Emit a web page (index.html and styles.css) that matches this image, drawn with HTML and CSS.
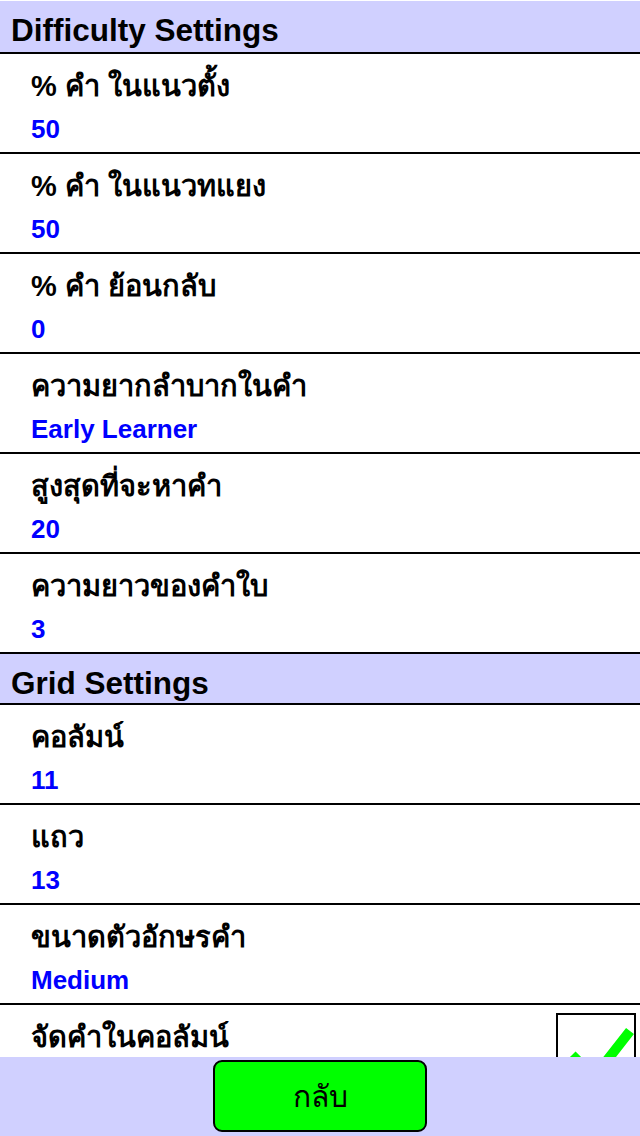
FILE: index.html
```html
<!doctype html>
<html lang="th">
<head>
  <meta charset="utf-8">
  <meta name="viewport" content="width=device-width, initial-scale=1">
  <title>Settings</title>
  <link rel="stylesheet" href="styles.css">
</head>
<body>
  <div class="screen">
    <div class="settings">
      <h2 class="section-title">Difficulty Settings</h2>
      <div class="setting">
        <p class="setting-label">% คำ ในแนวตั้ง</p>
        <p class="setting-value">50</p>
      </div>
      <div class="setting">
        <p class="setting-label">% คำ ในแนวทแยง</p>
        <p class="setting-value">50</p>
      </div>
      <div class="setting">
        <p class="setting-label">% คำ ย้อนกลับ</p>
        <p class="setting-value">0</p>
      </div>
      <div class="setting">
        <p class="setting-label">ความยากลำบากในคำ</p>
        <p class="setting-value">Early Learner</p>
      </div>
      <div class="setting">
        <p class="setting-label">สูงสุดที่จะหาคำ</p>
        <p class="setting-value">20</p>
      </div>
      <div class="setting">
        <p class="setting-label">ความยาวของคำใบ</p>
        <p class="setting-value">3</p>
      </div>

      <h2 class="section-title">Grid Settings</h2>
      <div class="setting">
        <p class="setting-label">คอลัมน์</p>
        <p class="setting-value">11</p>
      </div>
      <div class="setting">
        <p class="setting-label">แถว</p>
        <p class="setting-value">13</p>
      </div>
      <div class="setting">
        <p class="setting-label">ขนาดตัวอักษรคำ</p>
        <p class="setting-value">Medium</p>
      </div>
      <div class="setting setting-toggle">
        <p class="setting-label">จัดคำในคอลัมน์</p>
        <span class="checkbox" role="checkbox" aria-checked="true">
          <svg class="checkbox-icon" viewBox="0 0 76 76" aria-hidden="true">
            <polyline points="14,40 36,62 72,16" />
          </svg>
        </span>
      </div>
    </div>
    <div class="toolbar">
      <button class="back-button" type="button">กลับ</button>
    </div>
  </div>
</body>
</html>
```

FILE: styles.css
```css
:root {
  --lavender: #d0d0ff;
  --line: #000;
  --value: #0000ff;
  --green: #00ff00;
}

*,
*::before,
*::after {
  box-sizing: border-box;
}

body {
  margin: 0;
  background: #fff;
  color: #000;
  font-family: "Liberation Sans", "DejaVu Sans", sans-serif;
}

.screen {
  display: flex;
  flex-direction: column;
  height: 100vh;
  padding-top: 1px;
}

.settings {
  flex: 1;
  overflow: hidden;
}

.section-title {
  margin: 0;
  height: 51px;
  padding-left: 11px;
  background: var(--lavender);
  font-size: 31.5px;
  font-weight: bold;
  line-height: 58px;
}

.settings > * + * {
  border-top: 2px solid var(--line);
}

.setting {
  height: 100px;
  padding-left: 31px;
}

.setting-label {
  margin: 0;
  padding-top: 14px;
  font-size: 29px;
  font-weight: bold;
  line-height: 36px;
}

.setting-value {
  margin: 0;
  padding-top: 13px;
  color: var(--value);
  font-size: 26px;
  font-weight: bold;
  line-height: 24px;
}

.setting-toggle {
  display: flex;
  justify-content: space-between;
  align-items: flex-start;
  padding-right: 4px;
}

.checkbox {
  display: block;
  width: 80px;
  height: 80px;
  margin-top: 8px;
  border: 2px solid var(--line);
  background: #fff;
}

.checkbox-icon {
  display: block;
  width: 76px;
  height: 76px;
  fill: none;
  stroke: var(--green);
  stroke-width: 10;
}

.toolbar {
  display: flex;
  justify-content: center;
  height: 79px;
  padding-top: 3px;
  background: var(--lavender);
}

.back-button {
  width: 214px;
  height: 72px;
  background: var(--green);
  border: 2px solid var(--line);
  border-radius: 9px;
  color: #000;
  font-family: "Liberation Sans", "DejaVu Sans", sans-serif;
  font-size: 30px;
  cursor: pointer;
}
```
